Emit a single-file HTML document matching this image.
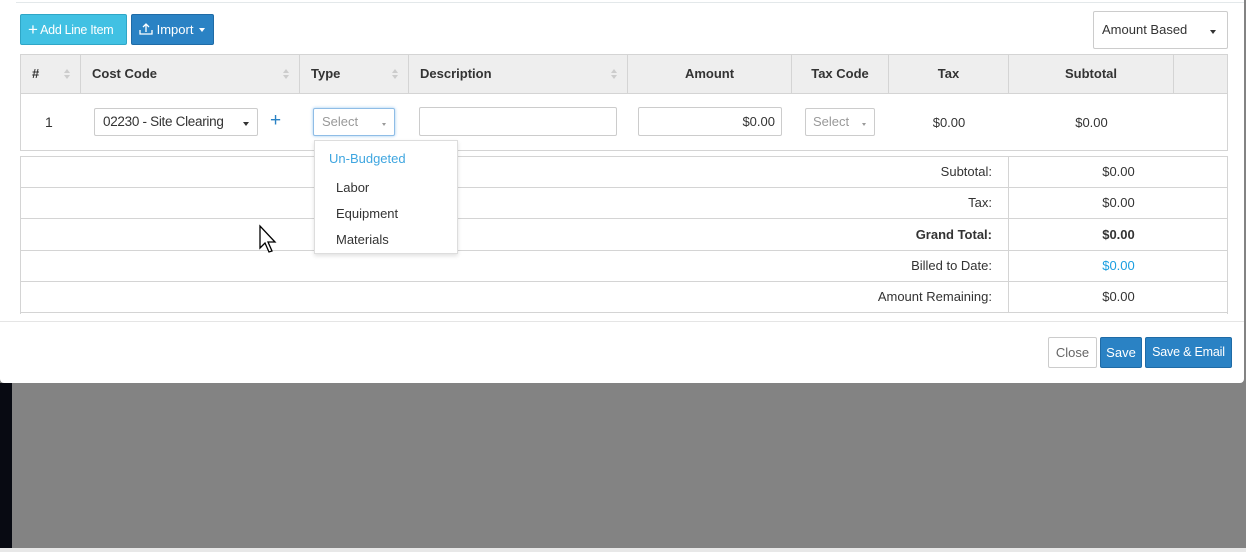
<!DOCTYPE html>
<html><head><style>
*{box-sizing:border-box;margin:0;padding:0}
body{width:1246px;height:552px;overflow:hidden;background:#838383;font-family:"Liberation Sans",sans-serif;font-size:13px;color:#333;position:relative}
.a{position:absolute}
.modal{left:0;top:0;width:1244px;height:383px;background:#fff;border-radius:0 0 4px 4px}
.th{position:absolute;top:55px;height:39px;line-height:38px;font-weight:bold;font-size:13px;color:#333;border-right:1px solid #d4d4d4}
.sort{position:absolute;right:10px;top:14px;width:6px;height:11px}
.sort:before{content:"";position:absolute;left:0;top:0;border:3px solid transparent;border-bottom:4px solid #ccc;border-top:0}
.sort:after{content:"";position:absolute;left:0;top:6px;border:3px solid transparent;border-top:4px solid #ccc;border-bottom:0}
.inp{position:absolute;border:1px solid #ccc;border-radius:2px;background:#fff;height:28px}
.caret{position:absolute;width:0;height:0;border-left:3px solid transparent;border-right:3px solid transparent;border-top:4px solid #333}
.sr{position:absolute;left:20px;width:1208px;height:32px;border-bottom:1px solid #d4d4d4}
.sr .l{position:absolute;right:236px;top:0;line-height:31px;font-size:13px}
.sr .v{position:absolute;left:988px;width:220px;top:0;line-height:31px;text-align:center;border-left:1px solid #d4d4d4;height:31px}
</style></head><body>
<div class="a" style="left:0;top:383px;width:12px;height:166px;background:#080a12"></div>
<div class="a" style="left:0;top:548px;width:1246px;height:4px;background:#e8e8e8"></div>
<div class="a modal">
<div class="a" style="left:16px;top:2px;width:1228px;height:1px;background:#e3e8ea"></div>
<div class="a" style="left:20px;top:14px;width:107px;height:31px;background:#41c1e3;border:1px solid #2fa6c6;border-radius:2px;color:#fff;line-height:29px;font-size:12.5px;padding-left:7px;letter-spacing:-0.3px"><span style="font-size:17px;vertical-align:-1px">+</span> Add Line Item</div>
<div class="a" style="left:131px;top:14px;width:83px;height:31px;background:#2a82c4;border:1px solid #1f6ba6;border-radius:2px;color:#fff;line-height:29px;font-size:13px;padding-left:7px">
<svg width="14" height="14" viewBox="0 0 14 14" style="vertical-align:-2px"><path d="M1 8v4h12V8M7 10V2M4 5l3-3 3 3" fill="none" stroke="#fff" stroke-width="1.3"/></svg> Import <span style="display:inline-block;border-left:3px solid transparent;border-right:3px solid transparent;border-top:4px solid #fff;vertical-align:2px;margin-left:2px"></span></div>
<div class="inp" style="left:1093px;top:11px;width:135px;height:38px;line-height:36px;padding-left:8px;font-size:13px">Amount Based<div class="caret" style="right:11px;top:18px"></div></div>

<div class="a" style="left:20px;top:54px;width:1208px;height:97px;border:1px solid #d4d4d4"></div>
<div class="a" style="left:21px;top:55px;width:1206px;height:39px;background:#eee;border-bottom:1px solid #d4d4d4"></div>
<div class="th" style="left:21px;width:60px;padding-left:11px">#<div class="sort"></div></div>
<div class="th" style="left:81px;width:219px;padding-left:11px">Cost Code<div class="sort"></div></div>
<div class="th" style="left:300px;width:109px;padding-left:11px">Type<div class="sort"></div></div>
<div class="th" style="left:409px;width:219px;padding-left:11px">Description<div class="sort"></div></div>
<div class="th" style="left:628px;width:164px;text-align:center">Amount</div>
<div class="th" style="left:792px;width:97px;text-align:center">Tax Code</div>
<div class="th" style="left:889px;width:120px;text-align:center">Tax</div>
<div class="th" style="left:1009px;width:165px;text-align:center">Subtotal</div>

<div class="a" style="left:45px;top:114px;font-size:14px">1</div>
<div class="inp" style="left:94px;top:108px;width:164px;line-height:26px;padding-left:8px;font-size:13.5px;letter-spacing:-0.3px">02230 - Site Clearing<div class="caret" style="right:8px;top:13px"></div></div>
<div class="a" style="left:270px;top:110px;color:#2a82c4;font-size:19px">+</div>
<div class="inp" style="left:313px;top:108px;width:82px;border-color:#8fbde6;box-shadow:0 0 3px #9cc8ef;line-height:26px;padding-left:8px;color:#999">Select<div class="caret" style="right:8px;top:14px;border-top-color:#999;border-width:3px 2.5px 0"></div></div>
<div class="inp" style="left:419px;top:107px;width:198px;height:29px"></div>
<div class="inp" style="left:638px;top:107px;width:144px;height:29px;text-align:right;padding-right:6px;line-height:27px">$0.00</div>
<div class="inp" style="left:805px;top:108px;width:70px;line-height:26px;padding-left:7px;color:#999">Select<div class="caret" style="right:8px;top:14px;border-top-color:#999;border-width:3px 2.5px 0"></div></div>
<div class="a" style="left:889px;width:120px;top:115px;text-align:center">$0.00</div>
<div class="a" style="left:1009px;width:165px;top:115px;text-align:center">$0.00</div>

<div class="a" style="left:20px;top:156px;width:1208px;height:158px;border:1px solid #d4d4d4;border-bottom:0"></div>
<div class="sr" style="top:156px"><div class="l">Subtotal:</div><div class="v">$0.00</div></div>
<div class="sr" style="top:187px"><div class="l">Tax:</div><div class="v">$0.00</div></div>
<div class="sr" style="top:219px"><div class="l" style="font-weight:bold">Grand Total:</div><div class="v" style="font-weight:bold">$0.00</div></div>
<div class="sr" style="top:250px"><div class="l">Billed to Date:</div><div class="v" style="color:#1a9ee0">$0.00</div></div>
<div class="sr" style="top:281px"><div class="l">Amount Remaining:</div><div class="v">$0.00</div></div>

<div class="a" style="left:314px;top:140px;width:144px;height:114px;background:#fff;border:1px solid #ddd;box-shadow:0 2px 4px rgba(0,0,0,.12)">
<div class="a" style="left:14px;top:10px;color:#3fa6e0">Un-Budgeted</div>
<div class="a" style="left:21px;top:39px">Labor</div>
<div class="a" style="left:21px;top:65px">Equipment</div>
<div class="a" style="left:21px;top:91px">Materials</div>
</div>
<svg class="a" style="left:258px;top:224px" width="22" height="30" viewBox="0 0 22 30"><path d="M2 2v22l5-5 4 9 3-1-4-9h7z" fill="#fff" stroke="#000" stroke-width="1.3"/></svg>

<div class="a" style="left:0;top:321px;width:1244px;height:1px;background:#e5e5e5"></div>
<div class="a" style="left:1048px;top:337px;width:49px;height:31px;border:1px solid #ccc;border-radius:2px;color:#666;line-height:29px;text-align:center">Close</div>
<div class="a" style="left:1100px;top:337px;width:42px;height:31px;background:#2a82c4;border:1px solid #1f6ba6;border-radius:2px;color:#fff;line-height:29px;text-align:center">Save</div>
<div class="a" style="left:1145px;top:337px;width:87px;height:31px;background:#2a82c4;border:1px solid #1f6ba6;border-radius:2px;color:#fff;line-height:29px;text-align:center;font-size:12.5px;letter-spacing:-0.2px">Save &amp; Email</div>
</div>
</body></html>
